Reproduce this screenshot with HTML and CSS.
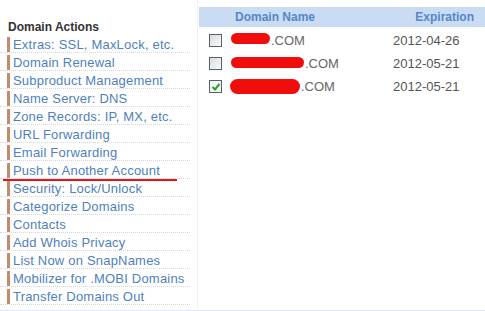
FILE: index.html
```html
<!DOCTYPE html>
<html lang="en">
<head>
  <meta charset="UTF-8" />
  <title>Domain Manager</title>
  <link rel="stylesheet" href="styles.css">
</head>
<body>

<div class="page">
  <aside class="sidebar">
    <h3>Domain Actions</h3>
    <ul class="actions">
      <li><a href="#">Extras: SSL, MaxLock, etc.</a></li>
      <li><a href="#">Domain Renewal</a></li>
      <li><a href="#">Subproduct Management</a></li>
      <li><a href="#">Name Server: DNS</a></li>
      <li><a href="#">Zone Records: IP, MX, etc.</a></li>
      <li><a href="#">URL Forwarding</a></li>
      <li><a href="#">Email Forwarding</a></li>
      <li class="marked"><a href="#">Push to Another Account</a></li>
      <li><a href="#">Security: Lock/Unlock</a></li>
      <li><a href="#">Categorize Domains</a></li>
      <li><a href="#">Contacts</a></li>
      <li><a href="#">Add Whois Privacy</a></li>
      <li><a href="#">List Now on SnapNames</a></li>
      <li><a href="#">Mobilizer for .MOBI Domains</a></li>
      <li><a href="#">Transfer Domains Out</a></li>
    </ul>
  </aside>

  <main class="domains">
    <div class="table-head">
      <span class="col-name">Domain Name</span>
      <span class="col-exp">Expiration</span>
    </div>
    <div class="row">
      <span class="check"></span>
      <span class="name"><span class="blot w1"></span>.COM</span>
      <span class="exp">2012-04-26</span>
    </div>
    <div class="row">
      <span class="check"></span>
      <span class="name"><span class="blot w2"></span>.COM</span>
      <span class="exp">2012-05-21</span>
    </div>
    <div class="row">
      <span class="check checked">
        <svg width="10" height="10" viewBox="0 0 10 10"><path d="M1.5 5 L4 7.5 L8.5 2" fill="none" stroke="#2f9a2f" stroke-width="2"/></svg>
      </span>
      <span class="name"><span class="blot w3"></span>.COM</span>
      <span class="exp">2012-05-21</span>
    </div>
  </main>
</div>

</body>
</html>
```

FILE: styles.css
```css
body {
  margin: 0;
  font-family: 'Liberation Sans', Arial, sans-serif;
  background-color: #fff;
  color: #555;
}

.page {
  display: flex;
  height: 311px;
  border-bottom: 1px solid #dfe8f2;
  box-sizing: border-box;
}

.sidebar {
  width: 198px;
  padding-top: 20px;
  border-right: 1px solid #eef2f6;
  box-sizing: border-box;
}

.sidebar h3 {
  margin: 0 0 0 8px;
  font-size: 12px;
  font-weight: bold;
  color: #333;
  line-height: 15px;
}

.actions {
  list-style: none;
  margin: 0;
  padding: 0;
  width: 190px;
}

.actions li {
  position: relative;
  border-bottom: 1px dotted #d6d6d6;
  padding-top: 2px;
}

.actions a {
  display: block;
  margin-left: 7px;
  padding-left: 3px;
  border-left: 3px solid #c28b6c;
  line-height: 15px;
  font-size: 13px;
  letter-spacing: 0.2px;
  color: #4f7fbd;
  text-decoration: none;
}

/* red annotation line under one item */
.actions li.marked::after {
  content: '';
  position: absolute;
  left: 3px;
  top: 18px;
  width: 174px;
  height: 2px;
  background: #e8141a;
}

.domains {
  flex: 1;
  padding-top: 7px;
  padding-left: 1px;
}

.table-head {
  display: flex;
  justify-content: space-between;
  height: 20px;
  line-height: 20px;
  background-color: #c9dcf4;
  padding: 0 11px 0 36px;
  font-size: 12px;
  font-weight: bold;
  color: #5686c8;
}

.table-head + .row {
  margin-top: 2px;
}

.row {
  display: flex;
  align-items: center;
  height: 23px;
  font-size: 13px;
  padding-left: 10px;
}

.check {
  display: flex;
  align-items: center;
  justify-content: center;
  width: 11px;
  height: 11px;
  border: 1px solid #52616f;
  background: linear-gradient(135deg, #dcdcdc, #fafafa);
}

.check.checked {
  background: #f4f4f4;
}

.name {
  display: flex;
  align-items: center;
  margin-left: 9px;
  width: 162px;
  color: #666;
}

.blot {
  display: inline-block;
  height: 11px;
  background: #f20d0d;
  border-radius: 6px;
  margin-right: 1px;
}

.blot.w1 { width: 39px; transform: translateY(-2px); }
.blot.w2 { width: 73px; transform: translateY(-1px); }
.blot.w3 { width: 70px; height: 15px; border-radius: 8px; margin-left: -1px; }

.exp {
  color: #555;
}
```
